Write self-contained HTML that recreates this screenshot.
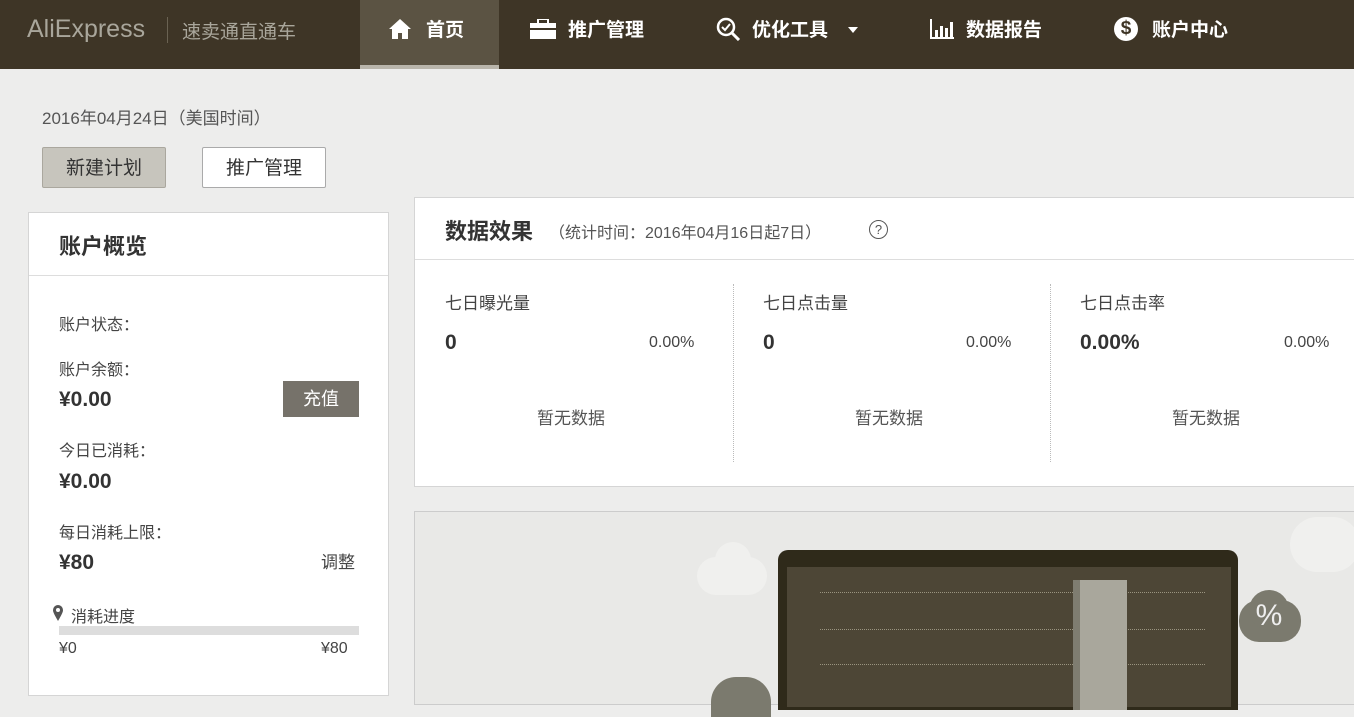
<!DOCTYPE html><html><head><meta charset="utf-8"><style>
*{margin:0;padding:0;box-sizing:border-box}
body{width:1354px;height:703px;overflow:hidden;background:#ededec;font-family:"Liberation Sans","Noto Sans CJK SC",sans-serif;color:#333;position:relative}
.a{position:absolute}
.nav{left:0;top:0;width:1354px;height:69px;background:#3e3526}
.nav .t{color:#fff;font-size:19px;font-weight:bold;top:15px}
.box{background:#fff;border:1px solid #d5d5d5}
.lbl{font-size:16px;color:#444}
.val{font-size:21px;font-weight:bold;color:#333}
</style></head><body>
<div class="a nav">
<div class="a" style="left:27px;top:15px;font-size:25px;color:#a9a69b">AliExpress</div>
<div class="a" style="left:167px;top:17px;width:1px;height:26px;background:#6a6252"></div>
<div class="a" style="left:182px;top:17px;font-size:19px;color:#a9a69b">速卖通直通车</div>
<div class="a" style="left:360px;top:0;width:139px;height:69px;background:#5b5343;border-bottom:4px solid #b9b5ab"></div>
<svg class="a" style="left:388px;top:18px" width="24" height="22" viewBox="0 0 24 22"><path d="M12 1L1 11h3v10h6v-6h4v6h6V11h3z" fill="#fff"/></svg>
<div class="a t" style="left:426px">首页</div>
<svg class="a" style="left:530px;top:19px" width="26" height="20"><rect x="8" y="0" width="10" height="5" fill="none" stroke="#fff" stroke-width="2"/><rect x="0" y="4" width="26" height="16" fill="#fff"/><rect x="0" y="9" width="26" height="2" fill="#3e3526"/></svg>
<div class="a t" style="left:568px">推广管理</div>
<svg class="a" style="left:716px;top:17px" width="26" height="24"><circle cx="10" cy="10" r="8" fill="none" stroke="#fff" stroke-width="2.5"/><path d="M16 16l7 7" stroke="#fff" stroke-width="3"/><path d="M6 10l3 3 5-6" fill="none" stroke="#fff" stroke-width="2"/></svg>
<div class="a t" style="left:752px">优化工具</div>
<svg class="a" style="left:847px;top:26px" width="12" height="8"><path d="M1 1h10L6 7z" fill="#fff"/></svg>
<svg class="a" style="left:930px;top:19px" width="24" height="20"><path d="M1 0v19h23" fill="none" stroke="#fff" stroke-width="2"/><rect x="5" y="11" width="3" height="7" fill="#fff"/><rect x="10" y="7" width="3" height="11" fill="#fff"/><rect x="15" y="9" width="3" height="9" fill="#fff"/><rect x="20" y="3" width="3" height="15" fill="#fff"/></svg>
<div class="a t" style="left:966px">数据报告</div>
<div class="a" style="left:1114px;top:17px;width:24px;height:24px;border-radius:50%;background:#fff;color:#3e3526;font-weight:bold;font-size:19px;text-align:center;line-height:24px">$</div>
<div class="a t" style="left:1152px">账户中心</div>
</div>
<div class="a" style="left:42px;top:104px;font-size:17px;color:#555">2016年04月24日（美国时间）</div>
<div class="a" style="left:42px;top:147px;width:124px;height:41px;background:#c7c5bd;border:1px solid #aaa79e;border-radius:2px;font-size:19px;text-align:center;line-height:41px;color:#333">新建计划</div>
<div class="a" style="left:202px;top:147px;width:124px;height:41px;background:#fff;border:1px solid #aaa;border-radius:2px;font-size:19px;text-align:center;line-height:41px;color:#333">推广管理</div>

<div class="a box" style="left:28px;top:212px;width:361px;height:484px">
<div class="a" style="left:0;top:0;width:359px;height:63px;border-bottom:1px solid #ddd"></div>
<div class="a" style="left:30px;top:16px;font-size:22px;font-weight:bold;color:#333">账户概览</div>
<div class="a lbl" style="left:30px;top:98px">账户状态：</div>
<div class="a lbl" style="left:30px;top:143px">账户余额：</div>
<div class="a val" style="left:30px;top:175px">¥0.00</div>
<div class="a" style="left:254px;top:168px;width:76px;height:36px;background:#76726a;color:#fff;font-size:18px;text-align:center;line-height:36px">充值</div>
<div class="a lbl" style="left:30px;top:224px">今日已消耗：</div>
<div class="a val" style="left:30px;top:257px">¥0.00</div>
<div class="a lbl" style="left:30px;top:306px">每日消耗上限：</div>
<div class="a val" style="left:30px;top:338px">¥80</div>
<div class="a lbl" style="left:292px;top:335px;font-size:17px">调整</div>
<svg class="a" style="left:23px;top:391px" width="12" height="18"><path d="M6 17C2 10 1 8 1 6a5 5 0 0 1 10 0c0 2-1 4-5 11z" fill="#555"/><circle cx="6" cy="6" r="2" fill="#fff"/></svg>
<div class="a lbl" style="left:42px;top:390px">消耗进度</div>
<div class="a" style="left:30px;top:413px;width:300px;height:9px;background:#ddd"></div>
<div class="a lbl" style="left:30px;top:427px">¥0</div>
<div class="a lbl" style="left:292px;top:427px">¥80</div>
</div>

<div class="a box" style="left:414px;top:197px;width:942px;height:290px">
<div class="a" style="left:0;top:0;width:940px;height:62px;border-bottom:1px solid #ddd"></div>
<div class="a" style="left:30px;top:16px;font-size:22px;font-weight:bold;color:#333">数据效果</div>
<div class="a" style="left:134px;top:21px;font-size:16px;color:#555">（统计时间：2016年04月16日起7日）</div>
<div class="a" style="left:454px;top:22px;width:19px;height:19px;border:1.5px solid #555;border-radius:50%;font-size:13px;text-align:center;line-height:17px;color:#555">?</div>
<div class="a" style="left:318px;top:86px;height:178px;border-left:1px dotted #bbb"></div>
<div class="a" style="left:635px;top:86px;height:178px;border-left:1px dotted #bbb"></div>
<div class="a lbl" style="left:30px;top:91px;font-size:17px">七日曝光量</div>
<div class="a val" style="left:30px;top:133px">0</div>
<div class="a lbl" style="left:234px;top:136px">0.00%</div>
<div class="a lbl" style="left:122px;top:206px;font-size:17px;color:#555">暂无数据</div>
<div class="a lbl" style="left:348px;top:91px;font-size:17px">七日点击量</div>
<div class="a val" style="left:348px;top:133px">0</div>
<div class="a lbl" style="left:551px;top:136px">0.00%</div>
<div class="a lbl" style="left:440px;top:206px;font-size:17px;color:#555">暂无数据</div>
<div class="a lbl" style="left:665px;top:91px;font-size:17px">七日点击率</div>
<div class="a val" style="left:665px;top:133px">0.00%</div>
<div class="a lbl" style="left:869px;top:136px">0.00%</div>
<div class="a lbl" style="left:757px;top:206px;font-size:17px;color:#555">暂无数据</div>
</div>

<div class="a" style="left:414px;top:511px;width:942px;height:194px;background:#e9e9e7;border:1px solid #ccc">
<div class="a" style="left:282px;top:45px;width:70px;height:38px;border-radius:20px;background:#f0f0ee"></div>
<div class="a" style="left:300px;top:30px;width:36px;height:36px;border-radius:50%;background:#f0f0ee"></div>
<div class="a" style="left:875px;top:5px;width:70px;height:55px;border-radius:30px;background:#f0f0ee"></div>
<div class="a" style="left:296px;top:165px;width:60px;height:40px;border-radius:25px 25px 0 0;background:#7b7a6e"></div>
<div class="a" style="left:824px;top:88px;width:62px;height:42px;border-radius:20px;background:#7b7a6e"></div>
<div class="a" style="left:834px;top:78px;width:40px;height:40px;border-radius:50%;background:#7b7a6e;color:#eee;font-size:30px;text-align:center;line-height:52px">%</div>
<div class="a" style="left:363px;top:38px;width:460px;height:160px;background:#2f2a1a;border-radius:10px 10px 0 0"></div>
<div class="a" style="left:372px;top:55px;width:444px;height:140px;background:#4d4636"></div>
<div class="a" style="left:405px;top:80px;width:385px;border-top:1px dotted #9a9480"></div>
<div class="a" style="left:405px;top:117px;width:385px;border-top:1px dotted #9a9480"></div>
<div class="a" style="left:405px;top:152px;width:385px;border-top:1px dotted #9a9480"></div>
<div class="a" style="left:658px;top:68px;width:54px;height:130px;background:#a9a79c;border-left:7px solid #7f7d71"></div>
</div>
</body></html>
